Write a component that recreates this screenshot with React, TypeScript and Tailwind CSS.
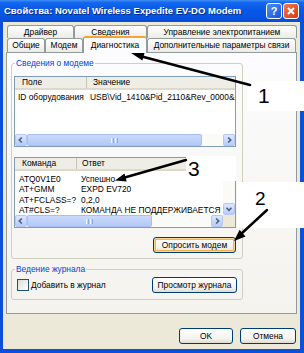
import React from "react";

function Chevron({ dir }: { dir: "l" | "r" | "u" | "d" }) {
  const pts =
    dir === "l"
      ? "7,3 4,6 7,9"
      : dir === "r"
      ? "5,3 8,6 5,9"
      : dir === "u"
      ? "3,7.5 6,4.5 9,7.5"
      : "3,4.5 6,7.5 9,4.5";
  return (
    <svg width="10" height="10" viewBox="0 0 12 12" className="block">
      <polyline points={pts} fill="none" stroke="#4D6185" strokeWidth="2" />
    </svg>
  );
}

function SBtn({ dir }: { dir: "l" | "r" | "u" | "d" }) {
  return (
    <div className="w-[12px] h-[12px] shrink-0 rounded-[2px] border border-[#B5C8F3] bg-[linear-gradient(to_bottom,#DCE6FE,#B8CCF8)] flex items-center justify-center">
      <Chevron dir={dir} />
    </div>
  );
}

function Grip() {
  return (
    <div className="flex gap-[1px]">
      <div className="w-[1px] h-[5px] bg-[#EEF4FE]" />
      <div className="w-[1px] h-[5px] bg-[#8DA9EC]" />
      <div className="w-[1px] h-[5px] bg-[#EEF4FE]" />
      <div className="w-[1px] h-[5px] bg-[#8DA9EC]" />
    </div>
  );
}

function HScroll({ thumb }: { thumb: string }) {
  return (
    <div className="h-[12px] flex bg-[#F4F3EE] shrink-0">
      <SBtn dir="l" />
      <div className={`${thumb} h-[12px] shrink-0 rounded-[2px] border border-[#A9BFF2] bg-[linear-gradient(to_bottom,#CADAFD,#B4C9F8)] flex items-center justify-center`}>
        <Grip />
      </div>
      <div className="flex-1 bg-[#FAFAF7]" />
      <SBtn dir="r" />
    </div>
  );
}

function Button({ children, cls, focus }: { children: React.ReactNode; cls: string; focus?: boolean }) {
  return (
    <div
      className={`${cls} h-[16px] shrink-0 rounded-[3px] border border-[#003C74] bg-[linear-gradient(to_bottom,#FFFFFF,#F3F2EE_70%,#DEDBD0)] flex items-center justify-center text-[8.4px] leading-none ${
        focus ? "shadow-[inset_0_0_0_1px_#FCD88F,inset_0_0_0_2px_#F3B34D]" : ""
      }`}
    >
      {children}
    </div>
  );
}

function Tab({ cls, children }: { cls: string; children: React.ReactNode }) {
  return (
    <div
      className={`${cls} shrink-0 border border-[#919B9C] border-b-0 rounded-t-[3px] bg-[linear-gradient(to_bottom,#FFFFFF,#ECEBE6)] flex items-center justify-center text-[8.4px] leading-none whitespace-nowrap`}
    >
      {children}
    </div>
  );
}

export default function App() {
  return (
    <div className="relative w-[304px] h-[353px] overflow-hidden bg-[#0A50DC] font-['Liberation_Sans',Arial,sans-serif] text-black flex flex-col">
      {/* title bar */}
      <div className="h-[22px] shrink-0 flex items-center pl-[4px] pr-[5px] bg-[linear-gradient(to_bottom,#3E8FF5_0%,#1467EE_12%,#0758E6_45%,#0553E0_80%,#0B4BD2_100%)]">
        <span className="flex-1 text-white font-bold text-[9.5px] whitespace-nowrap [text-shadow:1px_1px_0_#0A2A80]">
          Свойства: Novatel Wireless Expedite EV-DO Modem
        </span>
        <div className="w-[16px] h-[16px] rounded-[3px] border border-white bg-[linear-gradient(135deg,#4C8FF8,#1654DE)] flex items-center justify-center text-white font-bold text-[11px] leading-none">
          ?
        </div>
        <div className="ml-[1px] w-[16px] h-[16px] rounded-[3px] border border-white bg-[linear-gradient(135deg,#F2784C,#D63A12)] flex items-center justify-center">
          <svg width="10" height="10" viewBox="0 0 10 10">
            <path d="M2 2 L8 8 M8 2 L2 8" stroke="white" strokeWidth="2" />
          </svg>
        </div>
      </div>

      {/* body */}
      <div className="flex-1 ml-[3px] mr-[4px] mb-[4px] bg-[#ECE9D8] flex flex-col px-[3px]">
        {/* tabs row 1 */}
        <div className="mt-[3px] h-[13px] flex pl-[1px]">
          <Tab cls="w-[67px]">Драйвер</Tab>
          <Tab cls="w-[73px]">Сведения</Tab>
          <Tab cls="w-[150px]">Управление электропитанием</Tab>
        </div>
        {/* tabs row 2 */}
        <div className="h-[14px] flex items-end pl-[1px]">
          <Tab cls="w-[38px] h-[14px]">Общие</Tab>
          <Tab cls="w-[38px] h-[14px]">Модем</Tab>
          <div className="relative top-[1px] z-10 w-[64px] h-[17px] shrink-0 border border-[#919B9C] border-b-0 border-t-[2px] border-t-[#F2A437] rounded-t-[3px] bg-[#FCFCFE] flex items-center justify-center text-[8.4px] leading-none">
            Диагностика
          </div>
          <Tab cls="w-[149px] h-[14px]">Дополнительные параметры связи</Tab>
        </div>

        {/* panel */}
        <div className="h-[262px] border border-[#919B9C] bg-[linear-gradient(to_bottom,#FCFCFE,#F4F3EE)] flex flex-col">
          {/* group 1 */}
          <fieldset className="ml-[4px] mt-[5px] w-[232px] border border-[#D0D0BF] rounded-[3px] flex flex-col pb-[5px]">
            <legend className="ml-[3px] px-[1px] text-[8.4px] leading-[11px] text-[#0046D5]">Сведения о модеме</legend>
            {/* list 1 */}
            <div className="ml-[2px] mt-[7px] w-[222px] h-[71px] border border-[#7F9DB9] bg-white flex flex-col">
              <div className="h-[13px] shrink-0 flex bg-[#EFEEE6] border-b-[2px] border-[#DEDAC9] text-[8.4px] leading-none">
                <div className="w-[72px] flex items-center pl-[7px] border-r border-[#C7C5B2]">Поле</div>
                <div className="flex-1 flex items-center pl-[6px]">Значение</div>
              </div>
              <div className="flex-1 pt-[2px] overflow-hidden text-[8.4px]">
                <div className="h-[11px] flex items-center whitespace-nowrap">
                  <div className="w-[72px] pl-[3px] shrink-0">ID оборудования</div>
                  <div className="pl-[3px]">USB\Vid_1410&amp;Pid_2110&amp;Rev_0000&amp;M</div>
                </div>
              </div>
              <HScroll thumb="w-[175px]" />
            </div>

            {/* list 2 */}
            <div className="ml-[2px] mt-[10px] w-[222px] h-[71px] border border-[#7F9DB9] bg-white flex flex-col">
              <div className="flex-1 flex min-h-0">
                <div className="flex-1 flex flex-col min-w-0">
                  <div className="h-[13px] shrink-0 flex bg-[#EFEEE6] border-b-[2px] border-[#DEDAC9] text-[8.4px] leading-none">
                    <div className="w-[62px] flex items-center pl-[7px] border-r border-[#C7C5B2]">Команда</div>
                    <div className="flex-1 flex items-center pl-[5px]">Ответ</div>
                  </div>
                  <div className="flex-1 pt-[3px] overflow-hidden text-[8.4px] whitespace-nowrap">
                    {[
                      ["ATQ0V1E0", "Успешно"],
                      ["AT+GMM", "EXPD EV720"],
                      ["AT+FCLASS=?", "0,2,0"],
                      ["AT#CLS=?", "КОМАНДА НЕ ПОДДЕРЖИВАЕТСЯ"],
                    ].map(([a, b]) => (
                      <div key={a} className="h-[10.5px] flex items-center">
                        <div className="w-[62px] pl-[4px] shrink-0">{a}</div>
                        <div className="pl-[4px]">{b}</div>
                      </div>
                    ))}
                  </div>
                </div>
                <div className="w-[12px] shrink-0 flex flex-col bg-[#FAFAF7]">
                  <SBtn dir="u" />
                  <div className="flex-1" />
                  <SBtn dir="d" />
                </div>
              </div>
              <div className="flex">
                <div className="flex-1">
                  <HScroll thumb="w-[125px]" />
                </div>
                <div className="w-[12px] h-[12px] bg-[#ECE9D8]" />
              </div>
            </div>

            <div className="mt-[9px] mr-[6px] self-end">
              <Button cls="w-[83px]" focus>
                Опросить модем
              </Button>
            </div>
          </fieldset>

          {/* group 2 */}
          <fieldset className="ml-[4px] mt-[5px] w-[232px] border border-[#D0D0BF] rounded-[3px] flex flex-col pb-[6px]">
            <legend className="ml-[3px] px-[1px] text-[8.4px] leading-[11px] text-[#0046D5]">Ведение журнала</legend>
            <div className="mt-[2px] flex items-center">
              <div className="ml-[5px] w-[12px] h-[12px] shrink-0 border border-[#1C5180] bg-[linear-gradient(135deg,#DCDCD7,#FFFFFF)]" />
              <span className="ml-[2px] text-[8.4px]">Добавить в журнал</span>
              <div className="ml-auto mr-[5px]">
                <Button cls="w-[85px]">Просмотр журнала</Button>
              </div>
            </div>
          </fieldset>
        </div>

        {/* bottom buttons */}
        <div className="mt-[14px] flex justify-end gap-[7px] pr-[1px]">
          <Button cls="w-[54px]">OK</Button>
          <Button cls="w-[56px]">Отмена</Button>
        </div>
      </div>

      {/* annotations */}
      <div className="absolute left-[248px] top-[81px] w-[56px] h-[30px] bg-white">
        <span className="absolute left-[10px] top-[1px] text-[21px] leading-[28px]">1</span>
      </div>
      <div className="absolute left-[186px] top-[156px] w-[50px] h-[25px] bg-white">
        <span className="absolute left-[2px] top-[0px] text-[21px] leading-[26px]">3</span>
      </div>
      <div className="absolute left-[237px] top-[182px] w-[67px] h-[46px] bg-white">
        <span className="absolute left-[18px] top-[5px] text-[19px] leading-[24px]">2</span>
      </div>
      <svg className="absolute left-0 top-0 pointer-events-none" width="304" height="353" viewBox="0 0 304 353">
        <line x1="250" y1="85" x2="140" y2="56" stroke="black" strokeWidth="2.6" strokeLinecap="round" />
        <polygon points="131,53 142.4,60.5 144.8,51.9" fill="black" />
        <line x1="186" y1="160" x2="123" y2="178" stroke="black" strokeWidth="2.4" strokeLinecap="round" />
        <polygon points="115,180.5 126.7,181.6 124.5,173.4" fill="black" />
        <line x1="267" y1="210" x2="241" y2="234" stroke="black" strokeWidth="2.4" strokeLinecap="round" />
        <polygon points="234,241 245.5,236.5 239.6,229.8" fill="black" />
      </svg>
    </div>
  );
}
